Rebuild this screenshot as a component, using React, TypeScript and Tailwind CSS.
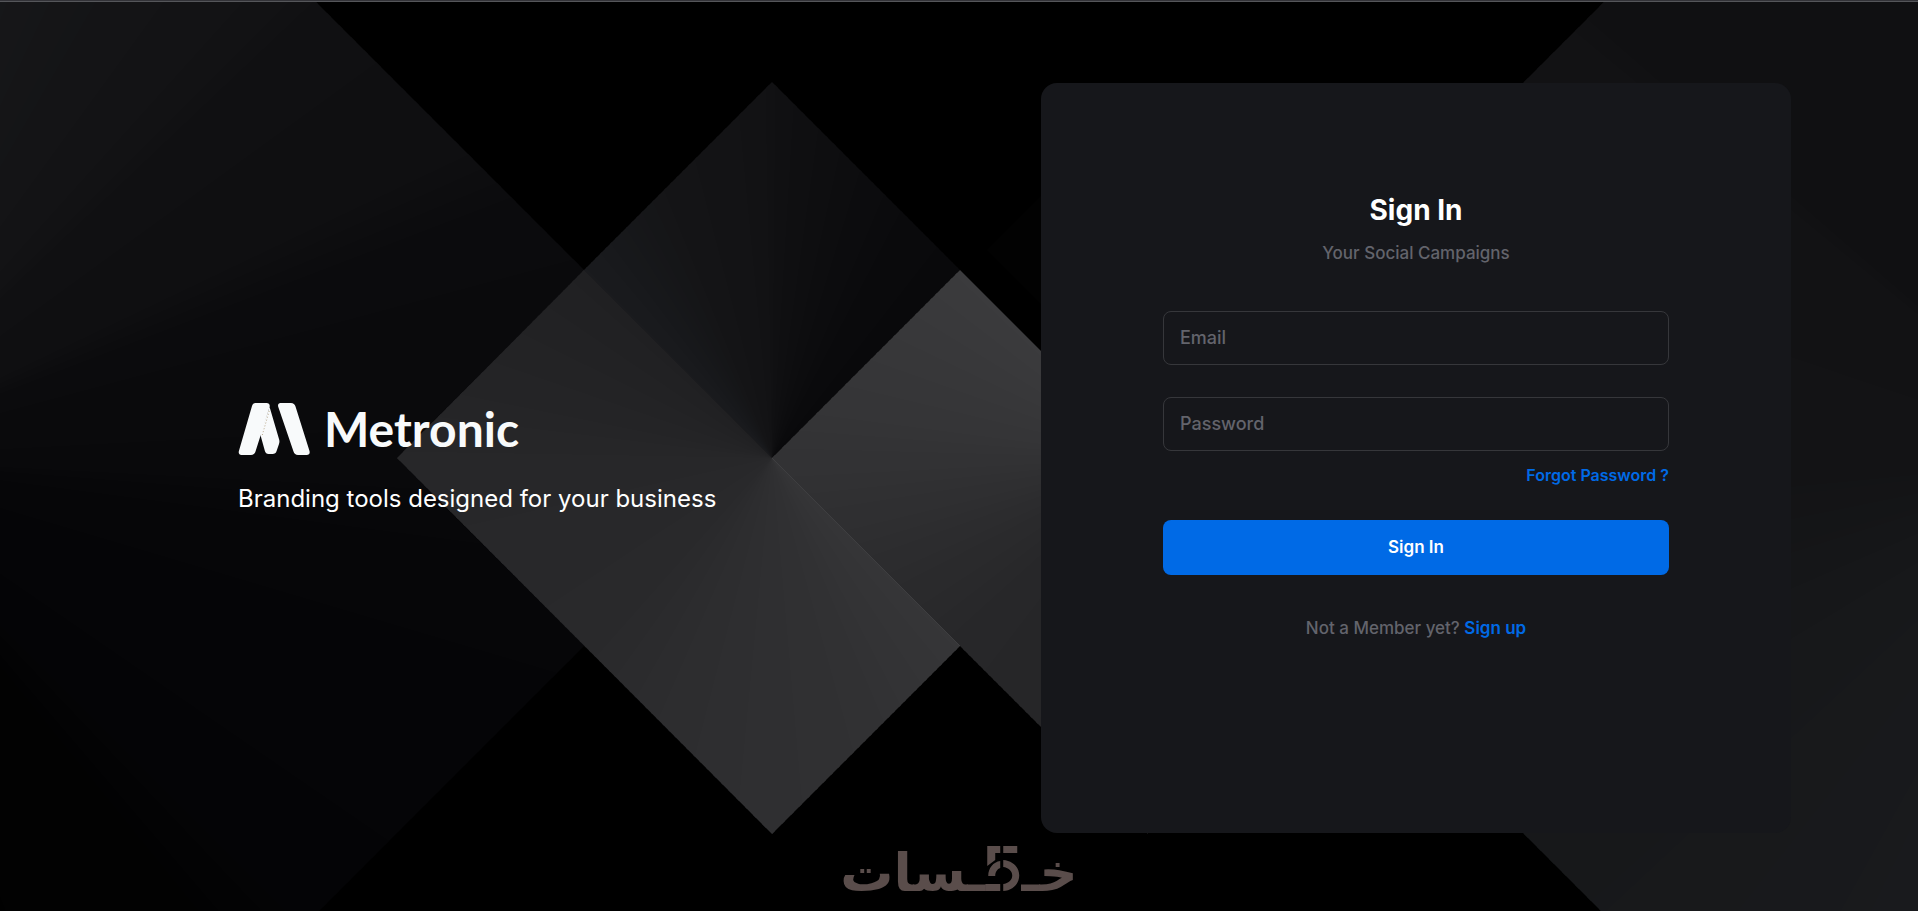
import React from "react";

type Stop = [number, string];

const toRgb = (hex: string) => [1, 3, 5].map((i) => parseInt(hex.slice(i, i + 2), 16));

function colorAt(stops: Stop[], angle: number) {
  for (let i = 1; i < stops.length; i++) {
    const [a0, c0] = stops[i - 1];
    const [a1, c1] = stops[i];
    if (angle <= a1) {
      const t = Math.max(0, (angle - a0) / (a1 - a0));
      const p = toRgb(c0);
      const q = toRgb(c1);
      return `rgb(${p.map((v, k) => Math.round(v + (q[k] - v) * t)).join(",")})`;
    }
  }
  return stops[stops.length - 1][1];
}

/** A polygon filled with a sweep of colour round a centre; angles run clockwise from the top. */
function Facet({ id, points, cx, cy, stops }: { id: string; points: string; cx: number; cy: number; stops: Stop[] }) {
  const from = stops[0][0];
  const to = stops[stops.length - 1][0];
  const step = 1.5;
  const at = (deg: number) => {
    const r = (deg * Math.PI) / 180;
    return `${cx + 2000 * Math.sin(r)},${cy - 2000 * Math.cos(r)}`;
  };
  const wedges = [];
  for (let a = from; a < to; a += step) {
    wedges.push(
      <polygon
        key={a}
        points={`${cx},${cy} ${at(a)} ${at(a + step + 0.5)}`}
        fill={colorAt(stops, a + step / 2)}
        shapeRendering="crispEdges"
      />,
    );
  }
  return (
    <g clipPath={`url(#${id})`}>
      <clipPath id={id}>
        <polygon points={points} />
      </clipPath>
      {wedges}
    </g>
  );
}

function Backdrop() {
  return (
    <svg
      className="absolute inset-0 h-full w-full"
      viewBox="0 0 1918 911"
      preserveAspectRatio="xMidYMid slice"
      aria-hidden="true"
    >
      <rect width="1918" height="911" fill="#000000" />
      <Facet
        id="far-left"
        points="-140,-454 772,458 -140,1370"
        cx={-168}
        cy={458}
        stops={[[15, "#17181a"], [32, "#141416"], [45, "#121214"], [46, "#101012"], [63, "#0f0f11"], [70, "#0b0b0d"], [92, "#09090b"], [98, "#060608"], [134, "#040406"], [142, "#020202"], [175, "#010101"]]}
      />
      <Facet
        id="far-right"
        points="1148,458 2060,-454 2060,1370"
        cx={2092}
        cy={458}
        stops={[[200, "#191a1d"], [235, "#17181a"], [250, "#151618"], [268, "#131315"], [309, "#121214"], [311, "#101012"], [345, "#101012"]]}
      />
      <polygon points="987,250 1060,177 1060,323" fill="#020202" />
      <Facet
        id="top"
        points="772,82 960,270 772,458 584,270"
        cx={772}
        cy={458}
        stops={[[314, "#1a1b1e"], [325, "#17181b"], [340, "#141416"], [359, "#121214"], [361, "#101012"], [375, "#0d0d0f"], [390, "#0a0a0c"], [406, "#09090b"]]}
      />
      <Facet
        id="lower"
        points="584,270 960,646 772,834 397,458"
        cx={772}
        cy={458}
        stops={[[133, "#363638"], [160, "#313133"], [180, "#2f2f31"], [200, "#2d2d2f"], [225, "#29292b"], [268, "#272729"], [285, "#242426"], [316, "#202022"]]}
      />
      <Facet
        id="middle"
        points="772,458 960,270 1148,458 1148,834"
        cx={1148}
        cy={458}
        stops={[[180, "#242426"], [225, "#272729"], [245, "#2b2b2d"], [262, "#303032"], [280, "#353537"], [316, "#3b3b3d"]]}
      />
      <line x1="772" y1="458" x2="960" y2="646" stroke="#3e3e40" />
    </svg>
  );
}

function MetronicMark() {
  return (
    <svg className="h-13 w-18" viewBox="0 0 72 52" fill="#f8fafb" aria-hidden="true">
      <path d="M17.500 0H28.500C31 0 32.200 1.800 31.600 4L17.500 48.500C16.800 50.800 15.300 52 13 52H3.500C1.300 52 .2 50.400.9 48L14 3C14.600 1 15.700 0 17.500 0Z" />
      <path d="M31.600 4L41 36C41.600 38 41.600 39 41 41L38.600 48C37.900 50.200 36.600 51 34.600 51H30.600C28.600 51 27.500 50 26.900 48L23 34L22 31Z" />
      <path d="M42.500 0H53C55.300 0 56.800 1.200 57.500 3.500L71.500 48C72.200 50.400 71 52 68.800 52H60C57.700 52 56.200 50.800 55.500 48.500L40.300 4C39.500 1.600 40.500 0 42.500 0Z" />
      <path d="M31.200 8L24 33" stroke="#b9a98c" strokeWidth="1" strokeDasharray="1 2" fill="none" />
    </svg>
  );
}

function Watermark() {
  return (
    <div
      dir="rtl"
      className="pointer-events-none absolute bottom-3 left-1/2 flex -translate-x-1/2 items-baseline text-[53px] leading-none font-bold text-[#5a4d4b] [font-family:'DejaVu_Sans',sans-serif]"
    >
      <span>خـ</span>
      <svg className="h-[45px] w-9" viewBox="-2 0 36 45" fill="#5a4d4b" aria-hidden="true">
        <path d="M0 0H13V7H8V14L0 20Z" />
        <path d="M16 0H30V7H16Z" />
        <path d="M13 15V22C10 23 8 26 8 30H1C1 22 6 16 13 15Z" />
        <path d="M16 14C25 14.500 32 21 32 29.500S25 44.500 16 45V38C21 37.500 25 34 25 29.500S21 21.500 16 21Z" />
        <path d="M-2 38H13V45H-2Z" />
      </svg>
      <span>ـسات</span>
    </div>
  );
}

const fieldClass =
  "h-[54px] w-full rounded-lg border border-[#36373b] bg-transparent px-4 pb-0.5 text-lg font-medium text-gray-200 outline-none placeholder:text-[#63646c] focus:border-[#006ae6]";

export default function App() {
  return (
    <div className="relative flex min-h-screen flex-col overflow-hidden bg-black [font-family:Inter,sans-serif]">
      <Backdrop />
      <div className="relative h-0.5 w-full border-b border-[#55565a] bg-[#333338]" />

      <main className="relative grid flex-1 grid-cols-1 lg:grid-cols-2">
        <section className="flex flex-col justify-center gap-[26px] px-8 pt-[54px] pb-12 lg:pl-[238px]">
          <a href="#" className="flex items-center gap-3.5 text-[#f8fafb]">
            <MetronicMark />
            <span className="text-[48px] leading-[52px] font-bold [font-family:Lato,sans-serif]">Metronic</span>
          </a>
          <h2 className="text-2xl leading-9 text-white">Branding tools designed for your business</h2>
        </section>

        <section className="flex items-start justify-center px-6 pt-[81px] pb-[78px] lg:pr-[127px] lg:pl-[82px]">
          <form
            className="flex min-h-[750px] w-full flex-col rounded-2xl bg-[#16171b] px-6 pt-[109px] lg:px-[122px]"
            onSubmit={(e: React.FormEvent) => e.preventDefault()}
          >
            <h1 className="text-center text-[28px] leading-9 font-bold text-white">Sign In</h1>
            <p className="mt-[13px] text-center text-[17px] leading-6 font-medium text-[#63646c]">Your Social Campaigns</p>

            <input aria-label="Email" type="email" placeholder="Email" className={`${fieldClass} mt-[46px]`} />
            <input aria-label="Password" type="password" placeholder="Password" className={`${fieldClass} mt-8`} />

            <a href="#" className="mt-3 self-end text-base leading-6 font-semibold text-[#006ae6]">Forgot Password ?</a>

            <button type="submit" className="mt-[33px] h-[55px] w-full rounded-lg bg-[#006ae6] text-[17px] font-semibold text-white">
              Sign In
            </button>

            <p className="mt-[41px] text-center text-[17px] leading-6 font-medium text-[#63646c]">
              Not a Member yet? <a href="#" className="font-semibold text-[#006ae6]">Sign up</a>
            </p>
          </form>
        </section>
      </main>

      <Watermark />
    </div>
  );
}
